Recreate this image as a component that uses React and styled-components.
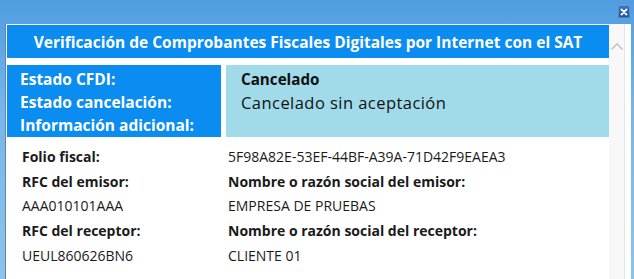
import React from "react";
import styled, { createGlobalStyle } from "styled-components";

const Global = createGlobalStyle`
  html, body { margin: 0; padding: 0; overflow: hidden; }
  body { font-family: "Open Sans", "Noto Sans", sans-serif; background: #fff; }
`;

const Frame = styled.div`
  width: 634px;
  height: 279px;
  display: flex;
  flex-direction: column;
  background: linear-gradient(180deg, #4f9de0 0%, #78b6e8 40%, #8cc3ec 100%);
`;

const TopBar = styled.div`
  height: 24px;
  display: flex;
  justify-content: flex-end;
  align-items: flex-start;
  padding-right: 4px;
  box-sizing: border-box;
`;

const CloseButton = styled.div`
  margin-top: 5px;
  width: 12px;
  height: 13px;
  background: linear-gradient(180deg, #3a78c8 0%, #1d4fa0 100%);
  border-radius: 2px;
  display: flex;
  align-items: center;
  justify-content: center;
  box-shadow: inset 0 0 0 1px rgba(255,255,255,0.25);
`;

const Client = styled.div`
  flex: 1;
  display: flex;
  margin-left: 5px;
  margin-right: 3px;
  border-left: 1px solid #5b87b8;
  background: #fff;
  min-height: 0;
`;

const Main = styled.div`
  width: 603px;
  padding-left: 1px;
  padding-top: 1px;
  display: flex;
  flex-direction: column;
`;

const Title = styled.div`
  height: 33px;
  background: #0b8cf0;
  color: #fff;
  font-weight: 700;
  font-size: 15.5px;
  display: flex;
  align-items: center;
  justify-content: center;
  white-space: nowrap;
`;

const StatusGrid = styled.div`
  margin-top: 7px;
  height: 72px;
  display: grid;
  grid-template-columns: 214px 1fr;
  column-gap: 5px;
`;

const StatusLabels = styled.div`
  background: #0b8cf0;
  color: #fff;
  font-weight: 700;
  font-size: 15.5px;
  padding: 3px 0 0 13px;
  display: flex;
  flex-direction: column;
  line-height: 23px;
  white-space: nowrap;
`;

const StatusValues = styled.div`
  background: #a1dbe9;
  color: #111;
  padding: 3px 0 0 15px;
  display: flex;
  flex-direction: column;
  white-space: nowrap;
`;

const StatusValue = styled.span`
  font-weight: ${(p) => (p.$bold ? 700 : 400)};
  font-size: ${(p) => (p.$bold ? "15.2px" : "16.5px")};
  letter-spacing: ${(p) => (p.$bold ? "0" : "0.45px")};
  line-height: ${(p) => (p.$bold ? "23px" : "24px")};
`;

const Details = styled.div`
  padding: 7px 0 0 15px;
  display: grid;
  grid-template-columns: 206px 1fr;
  grid-auto-rows: 24.8px;
  align-items: center;
  font-size: 14px;
  color: #1a1a1a;
`;

const Cell = styled.span`
  font-weight: ${(p) => (p.$bold ? 700 : 400)};
  white-space: nowrap;
`;

const Scrollbar = styled.div`
  width: 15px;
  background: #f8f8f8;
  display: flex;
  justify-content: center;
  padding-top: 18px;
  box-sizing: border-box;
`;

const ScrollEdge = styled.div`
  width: 6px;
  border-left: 1px solid #e6e6e6;
  background: #fff;
`;

export default function App() {
  const rows = [
    [["Folio fiscal:", true], ["5F98A82E-53EF-44BF-A39A-71D42F9EAEA3", false]],
    [["RFC del emisor:", true], ["Nombre o razón social del emisor:", true]],
    [["AAA010101AAA", false], ["EMPRESA DE PRUEBAS", false]],
    [["RFC del receptor:", true], ["Nombre o razón social del receptor:", true]],
    [["UEUL860626BN6", false], ["CLIENTE 01", false]],
  ];
  return (
    <>
      <Global />
      <Frame>
        <TopBar>
          <CloseButton>
            <svg width="8" height="8" viewBox="0 0 8 8">
              <path d="M1.5 1.5 L6.5 6.5 M6.5 1.5 L1.5 6.5" stroke="#fff" strokeWidth="1.8" strokeLinecap="round" />
            </svg>
          </CloseButton>
        </TopBar>
        <Client>
          <Main>
            <Title>Verificación de Comprobantes Fiscales Digitales por Internet con el SAT</Title>
            <StatusGrid>
              <StatusLabels>
                <span>Estado CFDI:</span>
                <span>Estado cancelación:</span>
                <span>Información adicional:</span>
              </StatusLabels>
              <StatusValues>
                <StatusValue $bold>Cancelado</StatusValue>
                <StatusValue>Cancelado sin aceptación</StatusValue>
              </StatusValues>
            </StatusGrid>
            <Details>
              {rows.map((r, i) =>
                r.map(([t, b], j) => (
                  <Cell key={`${i}-${j}`} $bold={b}>{t}</Cell>
                ))
              )}
            </Details>
          </Main>
          <Scrollbar>
            <svg width="14" height="9" viewBox="0 0 14 9">
              <path d="M1.5 7.5 L7 2 L12.5 7.5" stroke="#c4c4c4" strokeWidth="1.6" fill="none" />
            </svg>
          </Scrollbar>
          <ScrollEdge />
        </Client>
      </Frame>
    </>
  );
}
